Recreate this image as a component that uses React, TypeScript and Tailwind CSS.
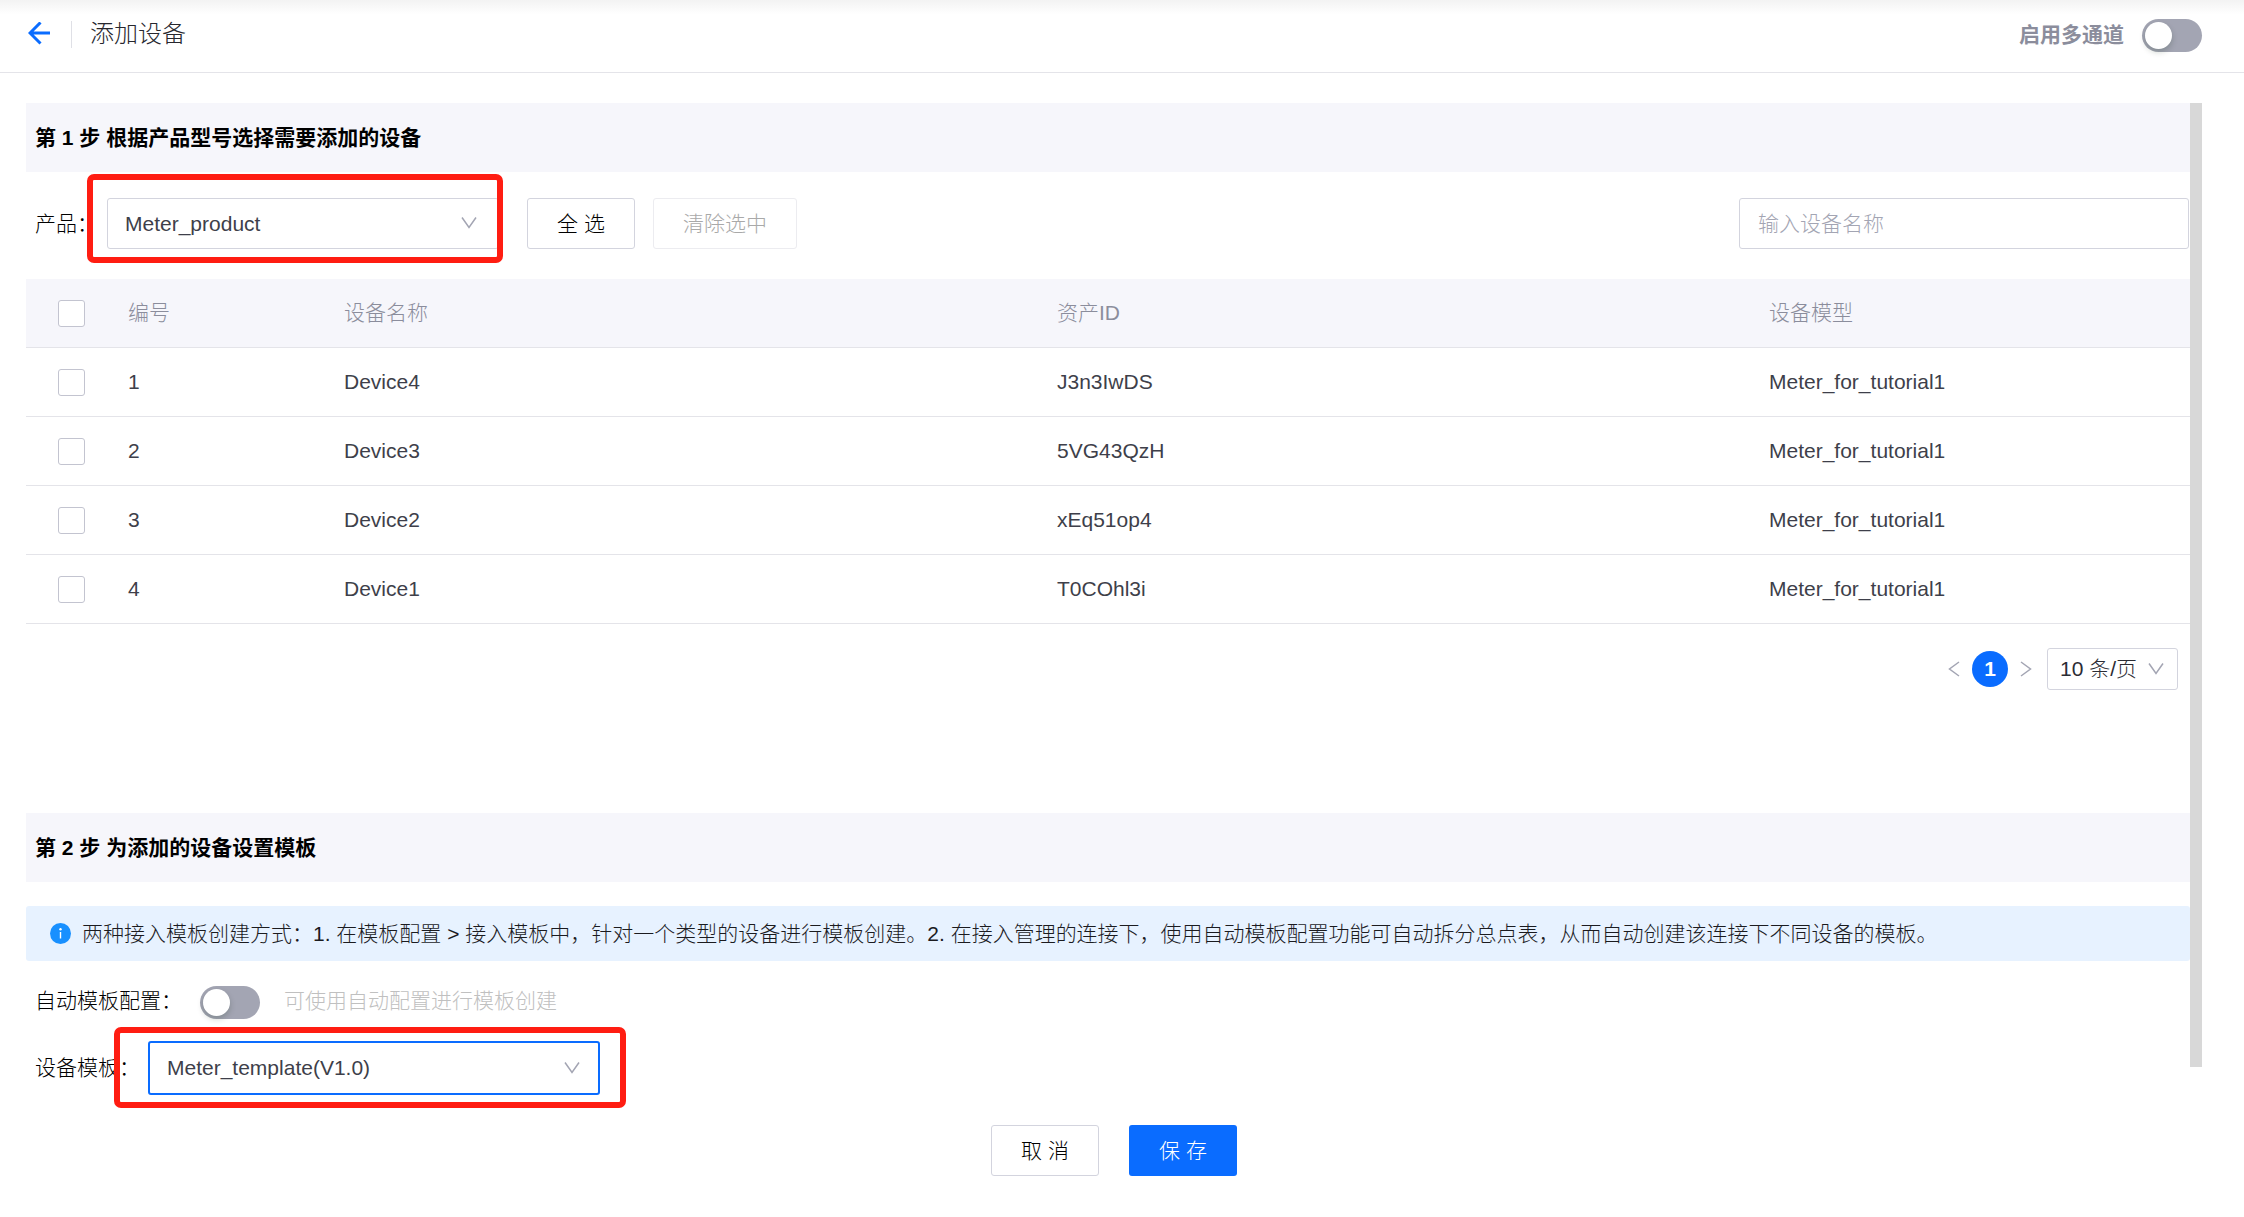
import React, { useState } from "react";

interface Device {
  no: number;
  name: string;
  assetId: string;
  model: string;
}

const DEVICES: Device[] = [
  { no: 1, name: "Device4", assetId: "J3n3IwDS", model: "Meter_for_tutorial1" },
  { no: 2, name: "Device3", assetId: "5VG43QzH", model: "Meter_for_tutorial1" },
  { no: 3, name: "Device2", assetId: "xEq51op4", model: "Meter_for_tutorial1" },
  { no: 4, name: "Device1", assetId: "T0COhl3i", model: "Meter_for_tutorial1" },
];

const CHECKBOX =
  "block size-[27px] appearance-none rounded-[3px] border border-[#c3c4d0] bg-white checked:border-[#0a6cff] checked:bg-[#0a6cff]";

function Chevron({ className }: { className: string }): React.ReactNode {
  return (
    <svg
      viewBox="0 0 16 12"
      className={`pointer-events-none absolute h-3 w-4 ${className}`}
      fill="none"
      stroke="#a3a5b3"
      strokeWidth="1.5"
      aria-hidden
    >
      <path d="M1 0.5 L8 10.5 L15 0.5" />
    </svg>
  );
}

function Switch(props: {
  id: string;
  checked: boolean;
  onChange: (v: boolean) => void;
}): React.ReactNode {
  return (
    <input
      id={props.id}
      type="checkbox"
      role="switch"
      checked={props.checked}
      onChange={(e) => props.onChange(e.target.checked)}
      className="flex h-[33px] w-[60px] shrink-0 appearance-none items-center rounded-full bg-[#a3a5b3] px-[3px] before:size-[27px] before:rounded-full before:bg-white before:shadow-[0_3px_6px_rgba(0,35,11,0.2)] checked:justify-end checked:bg-[#0a6cff]"
    />
  );
}

function StepTitle({ children }: { children: React.ReactNode }): React.ReactNode {
  return (
    <h2 className="flex h-[69px] items-center bg-[#f6f6fb] px-[9px] text-[21px] font-bold text-black">
      {children}
    </h2>
  );
}

/** Red frame that calls out the field it wraps. */
function Callout({ className }: { className: string }): React.ReactNode {
  return (
    <span
      className={`pointer-events-none absolute rounded-[7px] border-[6px] border-[#ff1d12] ${className}`}
      aria-hidden
    />
  );
}

export default function App(): React.ReactNode {
  const [multiChannel, setMultiChannel] = useState(false);
  const [autoTemplate, setAutoTemplate] = useState(false);
  const [selected, setSelected] = useState<number[]>([]);

  const allSelected = selected.length === DEVICES.length;
  const selectAll = () => setSelected(DEVICES.map((d) => d.no));
  const toggle = (no: number) =>
    setSelected((s) => (s.includes(no) ? s.filter((n) => n !== no) : [...s, no]));

  return (
    <div className="min-h-screen bg-white font-['Liberation_Sans','Noto_Sans_CJK_SC',sans-serif] text-[21px] leading-[30px] font-light text-[#1b1b1f]">
      <header className="flex h-[73px] items-center justify-between border-b border-[#e4e4e9] bg-linear-to-b from-[#f3f3f3] to-white to-20% pr-[42px] pb-1 pl-7">
        <div className="flex items-center">
          <button type="button" aria-label="返回">
            <svg
              viewBox="0 0 22 24"
              className="block h-6 w-[22px]"
              fill="none"
              stroke="#0a6cff"
              strokeWidth="3"
              aria-hidden
            >
              <path d="M12.5 0.5 L2 11 L12.5 21.5 M2 11 H22" />
            </svg>
          </button>
          <span className="ml-[21px] h-[27px] w-px bg-[#dfe0e6]" />
          <h1 className="ml-[18px] text-2xl text-[#27272e]">添加设备</h1>
        </div>
        <div className="flex items-center gap-[18px] pt-0.5">
          <label htmlFor="multi-channel" className="font-bold text-[#8b8d9c]">
            启用多通道
          </label>
          <Switch id="multi-channel" checked={multiChannel} onChange={setMultiChannel} />
        </div>
      </header>

      <main className="pt-[30px] pr-[42px] pb-10 pl-[26px]">
        <div className="flex">
          <div className="min-w-0 flex-1">
            <StepTitle>第 1 步 根据产品型号选择需要添加的设备</StepTitle>

            <div className="flex items-center pt-[26px] pr-px pb-[30px] pl-[9px]">
              <label htmlFor="product" className="w-[72px] text-black">
                产品：
              </label>
              <div className="relative">
                <select
                  id="product"
                  className="block h-[51px] w-[392px] appearance-none rounded-[3px] border border-[#d3d4de] bg-white px-[17px] text-[#3e3f4a]"
                >
                  <option>Meter_product</option>
                </select>
                <Chevron className="top-[19px] right-[22px]" />
                <Callout className="-top-6 -right-1 -bottom-[14px] -left-5" />
              </div>
              <button
                type="button"
                onClick={selectAll}
                className="ml-7 h-[51px] w-[108px] rounded-[3px] border border-[#d3d4de] text-black"
              >
                全 选
              </button>
              <button
                type="button"
                disabled={selected.length === 0}
                onClick={() => setSelected([])}
                className="ml-[18px] h-[51px] w-36 rounded-[3px] border border-[#d3d4de] text-black disabled:border-[#ececf0] disabled:text-[#a9a9a9]"
              >
                清除选中
              </button>
              <input
                type="text"
                aria-label="输入设备名称"
                placeholder="输入设备名称"
                className="ml-auto h-[51px] w-[450px] rounded-[3px] border border-[#d3d4de] px-[18px] placeholder:text-[#a3a5b3]"
              />
            </div>

            <table className="w-full table-fixed border-separate border-spacing-0 text-left">
              <colgroup>
                <col className="w-[90px]" />
                <col className="w-[216px]" />
                <col className="w-[713px]" />
                <col className="w-[712px]" />
                <col />
              </colgroup>
              <thead>
                <tr className="bg-[#f6f6fb] text-[#8b8d9c] *:h-[69px] *:border-b *:border-[#e4e4e9] *:font-light">
                  <th className="pl-8">
                    <input
                      type="checkbox"
                      aria-label="选择全部设备"
                      checked={allSelected}
                      onChange={() => (allSelected ? setSelected([]) : selectAll())}
                      className={CHECKBOX}
                    />
                  </th>
                  <th className="px-3">编号</th>
                  <th className="px-3">设备名称</th>
                  <th className="px-3">资产ID</th>
                  <th className="px-3">设备模型</th>
                </tr>
              </thead>
              <tbody>
                {DEVICES.map((d) => (
                  <tr
                    key={d.no}
                    className="text-[#3e3f4a] *:h-[69px] *:border-b *:border-[#e4e4e9]"
                  >
                    <td className="pl-8">
                      <input
                        type="checkbox"
                        aria-label={`选择 ${d.name}`}
                        checked={selected.includes(d.no)}
                        onChange={() => toggle(d.no)}
                        className={CHECKBOX}
                      />
                    </td>
                    <td className="px-3">{d.no}</td>
                    <td className="px-3">{d.name}</td>
                    <td className="px-3">{d.assetId}</td>
                    <td className="px-3">{d.model}</td>
                  </tr>
                ))}
              </tbody>
            </table>

            <nav aria-label="分页" className="mt-6 flex items-center justify-end gap-3 pr-3">
              <button type="button" aria-label="上一页">
                <svg viewBox="0 0 12 16" className="h-4 w-3" fill="none" stroke="#a3a5b3" strokeWidth="1.5">
                  <path d="M11 1 L1.5 8 L11 15" />
                </svg>
              </button>
              <button
                type="button"
                aria-current="page"
                className="size-9 rounded-full bg-[#0a6cff] font-bold text-white"
              >
                1
              </button>
              <button type="button" aria-label="下一页">
                <svg viewBox="0 0 12 16" className="h-4 w-3" fill="none" stroke="#a3a5b3" strokeWidth="1.5">
                  <path d="M1 1 L10.5 8 L1 15" />
                </svg>
              </button>
              <div className="relative ml-[3px]">
                <select
                  aria-label="每页条数"
                  className="block h-[42px] w-[131px] appearance-none rounded-[3px] border border-[#d3d4de] bg-white px-3 text-[#2b2c34]"
                >
                  <option>10 条/页</option>
                </select>
                <Chevron className="top-[15px] right-[14px]" />
              </div>
            </nav>

            <div className="mt-[123px]">
              <StepTitle>第 2 步 为添加的设备设置模板</StepTitle>
            </div>

            <div className="mt-6 flex h-[55px] items-center gap-[11px] rounded-[3px] bg-[#e7f2ff] px-6">
              <svg viewBox="0 0 21 21" className="size-[21px] shrink-0" aria-hidden>
                <circle cx="10.5" cy="10.5" r="10.5" fill="#1890ff" />
                <circle cx="10.5" cy="6.3" r="1.2" fill="#fff" />
                <path d="M9.8 9 H11.2 V15.5 H9.8 Z" fill="#fff" />
              </svg>
              <p>
                两种接入模板创建方式：1. 在模板配置 &gt;
                接入模板中，针对一个类型的设备进行模板创建。2.
                在接入管理的连接下，使用自动模板配置功能可自动拆分总点表，从而自动创建该连接下不同设备的模板。
              </p>
            </div>

            <div className="mt-[25px] flex h-[33px] items-start pl-[9px]">
              <label htmlFor="auto-template" className="w-[165px] text-black">
                自动模板配置：
              </label>
              <Switch id="auto-template" checked={autoTemplate} onChange={setAutoTemplate} />
              <span className="ml-6 text-[#c0c0c0]">可使用自动配置进行模板创建</span>
            </div>

            <div className="mt-[22px] flex items-center pl-[9px]">
              <label htmlFor="template" className="w-[113px] text-black">
                设备模板：
              </label>
              <div className="relative">
                <select
                  id="template"
                  className="block h-[54px] w-[452px] appearance-none rounded-[3px] border-2 border-[#0a6cff] bg-white px-[17px] text-[#3e3f4a]"
                >
                  <option>Meter_template(V1.0)</option>
                </select>
                <Chevron className="top-[21px] right-5" />
                <Callout className="-top-[14px] -right-[26px] -bottom-[13px] -left-[34px]" />
              </div>
            </div>
          </div>

          {/* scroll track */}
          <div className="mb-7 w-3 shrink-0 bg-[#d8d8d8]" aria-hidden />
        </div>

        <footer className="mt-[30px] flex justify-center gap-[30px]">
          <button
            type="button"
            className="h-[51px] w-[108px] rounded-[3px] border border-[#d3d4de] text-black"
          >
            取 消
          </button>
          <button type="button" className="h-[51px] w-[108px] rounded-[3px] bg-[#0a6cff] text-white">
            保 存
          </button>
        </footer>
      </main>
    </div>
  );
}
